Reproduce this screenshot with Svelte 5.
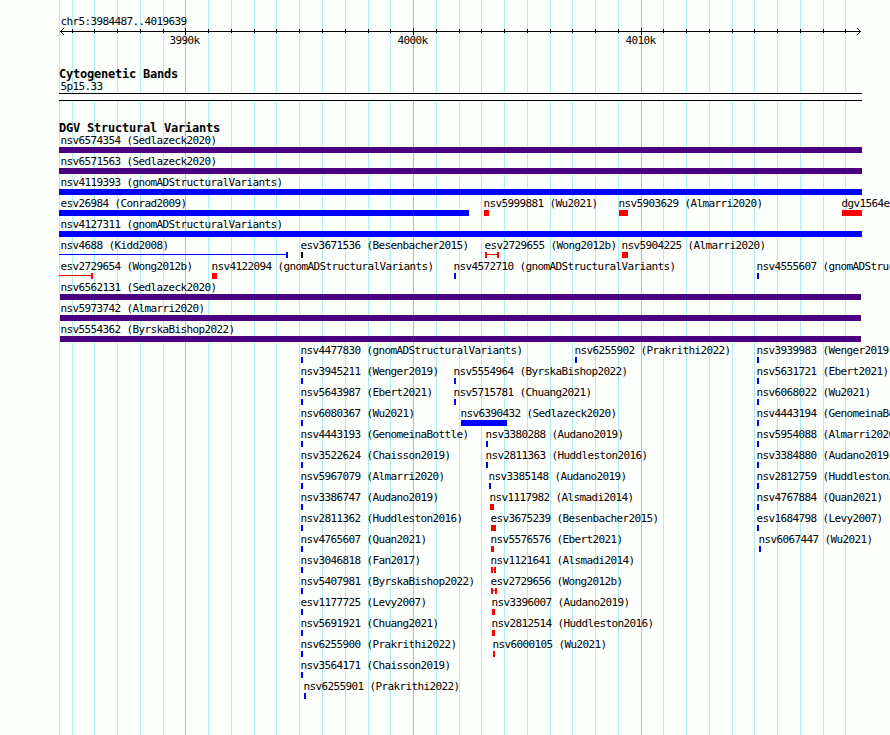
<script lang="ts">
	type Feature = {
		name: string;
		source: string;
		x: number;
		width: number;
		color: string;
		shape: 'bar' | 'span' | 'open';
		labelX: number;
	};

	const minor = [
		59, 72, 94, 117, 140, 163, 208, 231, 254, 276, 299, 322, 345, 368, 390, 436, 459, 481, 504,
		527, 550, 572, 595, 618, 663, 686, 709, 732, 754, 777, 800, 823, 845
	];
	const major = [185, 413, 641];
	const scale = ['3990k', '4000k', '4010k'];

	const gain = 'blue';
	const loss = 'red';
	const complex = 'indigo';

	function f(
		name: string,
		source: string,
		x: number,
		width = 2,
		color = gain,
		shape: Feature['shape'] = 'bar',
		labelX = Math.max(x - 1, 60)
	): Feature {
		return { name, source, x, width, color, shape, labelX };
	}

	const rows: Feature[][] = [
		[f('nsv6574354', 'Sedlazeck2020', 59, 803, complex)],
		[f('nsv6571563', 'Sedlazeck2020', 59, 803, complex)],
		[f('nsv4119393', 'gnomADStructuralVariants', 59, 803)],
		[
			f('esv26984', 'Conrad2009', 59, 410),
			f('nsv5999881', 'Wu2021', 484, 5, loss),
			f('nsv5903629', 'Almarri2020', 619, 9, loss),
			f('dgv1564e', '', 842, 20, loss)
		],
		[f('nsv4127311', 'gnomADStructuralVariants', 59, 803)],
		[
			f('nsv4688', 'Kidd2008', 59, 229, gain, 'open'),
			f('esv3671536', 'Besenbacher2015', 301, 2, 'black'),
			f('esv2729655', 'Wong2012b', 485, 14, loss, 'span'),
			f('nsv5904225', 'Almarri2020', 622, 6, loss)
		],
		[
			f('esv2729654', 'Wong2012b', 59, 34, loss, 'open'),
			f('nsv4122094', 'gnomADStructuralVariants', 212, 5, loss),
			f('nsv4572710', 'gnomADStructuralVariants', 454),
			f('nsv4555607', 'gnomADStructuralVariants', 757)
		],
		[f('nsv6562131', 'Sedlazeck2020', 60, 801, complex)],
		[f('nsv5973742', 'Almarri2020', 60, 801, complex)],
		[f('nsv5554362', 'ByrskaBishop2022', 60, 801, complex)],
		[
			f('nsv4477830', 'gnomADStructuralVariants', 301),
			f('nsv6255902', 'Prakrithi2022', 575),
			f('nsv3939983', 'Wenger2019', 757)
		],
		[
			f('nsv3945211', 'Wenger2019', 301),
			f('nsv5554964', 'ByrskaBishop2022', 454),
			f('nsv5631721', 'Ebert2021', 757)
		],
		[
			f('nsv5643987', 'Ebert2021', 301),
			f('nsv5715781', 'Chuang2021', 454),
			f('nsv6068022', 'Wu2021', 757)
		],
		[
			f('nsv6080367', 'Wu2021', 301),
			f('nsv6390432', 'Sedlazeck2020', 461, 46),
			f('nsv4443194', 'GenomeinaBottle', 757)
		],
		[
			f('nsv4443193', 'GenomeinaBottle', 301),
			f('nsv3380288', 'Audano2019', 486),
			f('nsv5954088', 'Almarri2020', 757)
		],
		[
			f('nsv3522624', 'Chaisson2019', 301),
			f('nsv2811363', 'Huddleston2016', 486),
			f('nsv3384880', 'Audano2019', 757)
		],
		[
			f('nsv5967079', 'Almarri2020', 301),
			f('nsv3385148', 'Audano2019', 489),
			f('nsv2812759', 'Huddleston2016', 757)
		],
		[
			f('nsv3386747', 'Audano2019', 301),
			f('nsv1117982', 'Alsmadi2014', 490, 4, loss),
			f('nsv4767884', 'Quan2021', 757)
		],
		[
			f('nsv2811362', 'Huddleston2016', 301),
			f('esv3675239', 'Besenbacher2015', 491, 5, loss),
			f('esv1684798', 'Levy2007', 757)
		],
		[
			f('nsv4765607', 'Quan2021', 301),
			f('nsv5576576', 'Ebert2021', 491, 3, loss),
			f('nsv6067447', 'Wu2021', 759)
		],
		[f('nsv3046818', 'Fan2017', 301), f('nsv1121641', 'Alsmadi2014', 491, 5, loss, 'span')],
		[f('nsv5407981', 'ByrskaBishop2022', 301), f('esv2729656', 'Wong2012b', 491, 6, loss, 'span')],
		[f('esv1177725', 'Levy2007', 301), f('nsv3396007', 'Audano2019', 492, 3, loss)],
		[f('nsv5691921', 'Chuang2021', 301), f('nsv2812514', 'Huddleston2016', 492, 3, loss)],
		[f('nsv6255900', 'Prakrithi2022', 301), f('nsv6000105', 'Wu2021', 493, 2, loss)],
		[f('nsv3564171', 'Chaisson2019', 301)],
		[f('nsv6255901', 'Prakrithi2022', 304)]
	];
</script>

<main class="browser">
	<svg class="gridlines" width="890" height="735" shape-rendering="crispEdges">
		{#each minor as x}
			<rect {x} y="0" width="1" height="735" fill="#afeeee" />
		{/each}
		{#each major as x}
			<rect {x} y="0" width="1" height="735" fill="#87ceeb" />
		{/each}
	</svg>

	<header class="ruler">
		<div class="region">chr5:3984487..4019639</div>
		<svg class="axis" width="890" height="7" shape-rendering="crispEdges">
			<rect x="60" y="3" width="801" height="1" />
			{#each minor.slice(1) as x}
				<rect {x} y="1" width="1" height="4" />
			{/each}
			{#each major as x}
				<rect {x} y="0" width="1" height="7" />
			{/each}
			{#each [1, 2, 3] as d}
				<rect x={60 + d} y={3 - d} width="1" height="1" />
				<rect x={60 + d} y={3 + d} width="1" height="1" />
				<rect x={860 - d} y={3 - d} width="1" height="1" />
				<rect x={860 - d} y={3 + d} width="1" height="1" />
			{/each}
		</svg>
		<div class="scale">
			{#each scale as label, i}
				<span style="margin-left: {major[i] - 15.5}px">{label}</span>
			{/each}
		</div>
	</header>

	<section class="bands">
		<h2>Cytogenetic Bands</h2>
		<div class="band-name">5p15.33</div>
		<div class="band"></div>
	</section>

	<section class="variants">
		<h2>DGV Structural Variants</h2>
		{#each rows as row}
			<div class="row">
				{#each row as feature}
					<span class="label" style="margin-left: {feature.labelX}px"
						>{feature.name}{feature.source ? ` (${feature.source})` : ''}</span
					>
					<span
						class="glyph {feature.shape}"
						style="margin-left: {feature.x}px; width: {feature.width}px; color: {feature.color}"
					></span>
				{/each}
			</div>
		{/each}
	</section>
</main>

<style>
	:global(body) {
		background: #fdfffd;
	}
	.browser {
		position: relative;
		box-sizing: border-box;
		width: 890px;
		height: 735px;
		padding-top: 15px;
		overflow: hidden;
		color: black;
		font: 11px/13px 'DejaVu Sans Mono', monospace;
		letter-spacing: -0.622px;
		white-space: nowrap;
	}
	.gridlines {
		position: absolute;
		top: 0;
		left: 0;
		z-index: -1;
	}
	.region,
	.band-name {
		margin-left: 60.5px;
	}
	.axis {
		display: block;
	}
	.scale {
		display: grid;
		margin-top: -1px;
	}
	.scale span {
		grid-area: 1 / 1;
	}
	h2 {
		margin: 0 0 0 59px;
		font-size: 12px;
		line-height: 13px;
		font-weight: bold;
		letter-spacing: -0.224px;
	}
	.bands {
		padding-top: 21px;
	}
	.band-name {
		height: 13px;
		margin-top: -1px;
	}
	.band {
		box-sizing: border-box;
		width: 803px;
		height: 8px;
		margin-left: 59px;
		border: solid black;
		border-width: 1px 0;
		background: #fdfffd;
	}
	.variants {
		padding-top: 21px;
	}
	.variants h2 {
		height: 12px;
	}
	.row {
		display: grid;
		grid-template-columns: 890px;
		grid-template-rows: 13px 8px;
	}
	.label {
		grid-area: 1 / 1;
		padding-left: 0.5px;
	}
	.glyph {
		grid-area: 2 / 1;
		box-sizing: border-box;
		height: 6px;
	}
	.bar {
		background: currentColor;
	}
	.span,
	.open {
		border: solid;
		border-width: 0 2px;
		background: linear-gradient(currentColor, currentColor) 0 2px / 100% 1px no-repeat;
	}
	.open {
		border-left: 0;
	}
</style>
